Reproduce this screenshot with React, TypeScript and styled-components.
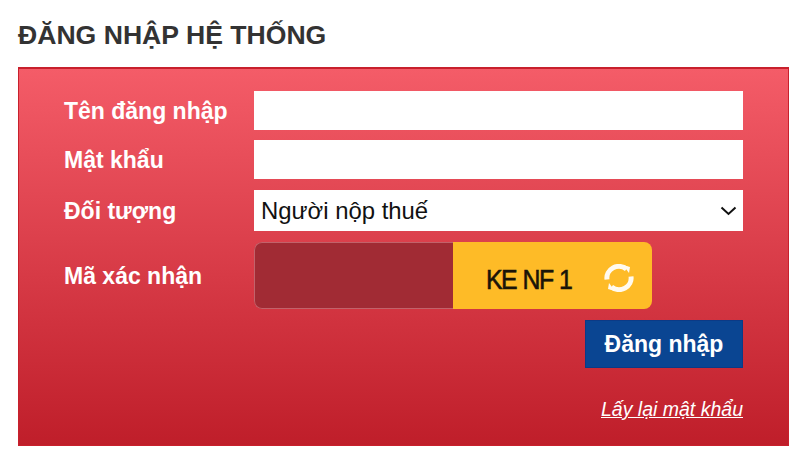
import React from "react";
import styled, { createGlobalStyle } from "styled-components";

const Global = createGlobalStyle`
  html, body { margin: 0; padding: 0; background: #fff; }
  body { font-family: "Liberation Sans", Arial, sans-serif; }
`;

const Page = styled.div`
  width: 800px;
  height: 450px;
  padding: 19px 11px 0 18px;
  box-sizing: border-box;
  overflow: hidden;
`;

const Title = styled.h2`
  margin: 0 0 14px;
  height: 34px;
  line-height: 32px;
  font-size: 26.6px;
  font-weight: 700;
  color: #333;
`;

const Panel = styled.form`
  width: 771px;
  height: 379px;
  box-sizing: border-box;
  border: 1px solid #c8202c;
  border-top-width: 2px;
  background: linear-gradient(to bottom, #f45c68 0%, #bf1e2a 100%);
  padding: 22px 45px 0 45px;
  display: flex;
  flex-direction: column;
`;

const Row = styled.div<{ $h: number; $mb: number }>`
  display: grid;
  grid-template-columns: 190px 1fr;
  align-items: center;
  height: ${(p) => p.$h}px;
  margin-bottom: ${(p) => p.$mb}px;
`;

const Label = styled.label<{ $down?: number }>`
  color: #fff;
  font-size: 23px;
  font-weight: 700;
  line-height: 26px;
  padding-top: ${(p) => p.$down ?? 0}px;
`;

const Input = styled.input`
  width: 100%;
  height: 100%;
  box-sizing: border-box;
  border: 0;
  background: #fff;
  padding: 0 7px;
  outline: none;
`;

const SelectBox = styled.div`
  height: 100%;
  background: #fff;
  display: flex;
  align-items: center;
  justify-content: space-between;
  padding: 0 6px 0 7px;
  font-size: 23.9px;
  color: #111;
`;

const Captcha = styled.div`
  width: 398px;
  height: 67px;
  display: flex;
  border-radius: 8px;
  overflow: hidden;
`;

const CaptchaInput = styled.input`
  width: 199px;
  box-sizing: border-box;
  background: #a12b34;
  border: 1px solid #c2626a;
  border-right: 0;
  border-radius: 8px 0 0 8px;
  outline: none;
`;

const CaptchaImage = styled.div`
  flex: 1;
  background: #febb27;
  display: flex;
  align-items: center;
  padding-left: 33px;
  padding-top: 9px;
  box-sizing: border-box;
`;

const CaptchaText = styled.span`
  width: 86px;
  margin-right: 32px;
  font-size: 27px;
  color: #1a1408;
  -webkit-text-stroke: 0.6px #1a1408;
  letter-spacing: -1.6px;
  word-spacing: 1px;
  white-space: nowrap;
  transform: scaleX(0.92);
  transform-origin: left center;
`;

const RefreshIcon = styled.svg`
  margin-top: -5px;
`;

const Actions = styled.div`
  display: flex;
  flex-direction: column;
  align-items: flex-end;
`;

const Submit = styled.button`
  width: 158px;
  height: 48px;
  box-sizing: border-box;
  border: 1px solid #0b3a86;
  background: #0a4592;
  color: #fff;
  font-family: inherit;
  font-size: 23px;
  font-weight: 700;
  padding: 0;
`;

const Forgot = styled.a`
  margin-top: 30px;
  color: #fff;
  font-size: 19.5px;
  font-style: italic;
  line-height: 22px;
  text-decoration: underline;
`;

export default function App() {
  return (
    <Page>
      <Global />
      <Title>ĐĂNG NHẬP HỆ THỐNG</Title>
      <Panel>
        <Row $h={39} $mb={10}>
          <Label>Tên đăng nhập</Label>
          <Input type="text" />
        </Row>
        <Row $h={39} $mb={11}>
          <Label $down={1}>Mật khẩu</Label>
          <Input type="password" />
        </Row>
        <Row $h={41} $mb={11}>
          <Label>Đối tượng</Label>
          <SelectBox>
            Người nộp thuế
            <svg width="17" height="10" viewBox="0 0 17 10" fill="none" stroke="#111" strokeWidth="2">
              <path d="M1.5 1.5 L8.5 8 L15.5 1.5" />
            </svg>
          </SelectBox>
        </Row>
        <Row $h={67} $mb={11}>
          <Label $down={1}>Mã xác nhận</Label>
          <Captcha>
            <CaptchaInput type="text" />
            <CaptchaImage>
              <CaptchaText>KE NF 1</CaptchaText>
              <RefreshIcon width="30" height="28" viewBox="0 0 30 28" fill="none" stroke="#fffaf0" strokeWidth="5">
                <path d="M3 15.5 A12 11.5 0 0 1 22.5 5" />
                <path d="M27 12.5 A12 11.5 0 0 1 7.5 23" />
                <path d="M19 1 L26 3 L25 9 Z" fill="#fffaf0" stroke="none" />
                <path d="M11 27 L4 25 L5 19 Z" fill="#fffaf0" stroke="none" />
              </RefreshIcon>
            </CaptchaImage>
          </Captcha>
        </Row>
        <Actions>
          <Submit type="button">Đăng nhập</Submit>
          <Forgot href="#">Lấy lại mật khẩu</Forgot>
        </Actions>
      </Panel>
    </Page>
  );
}
